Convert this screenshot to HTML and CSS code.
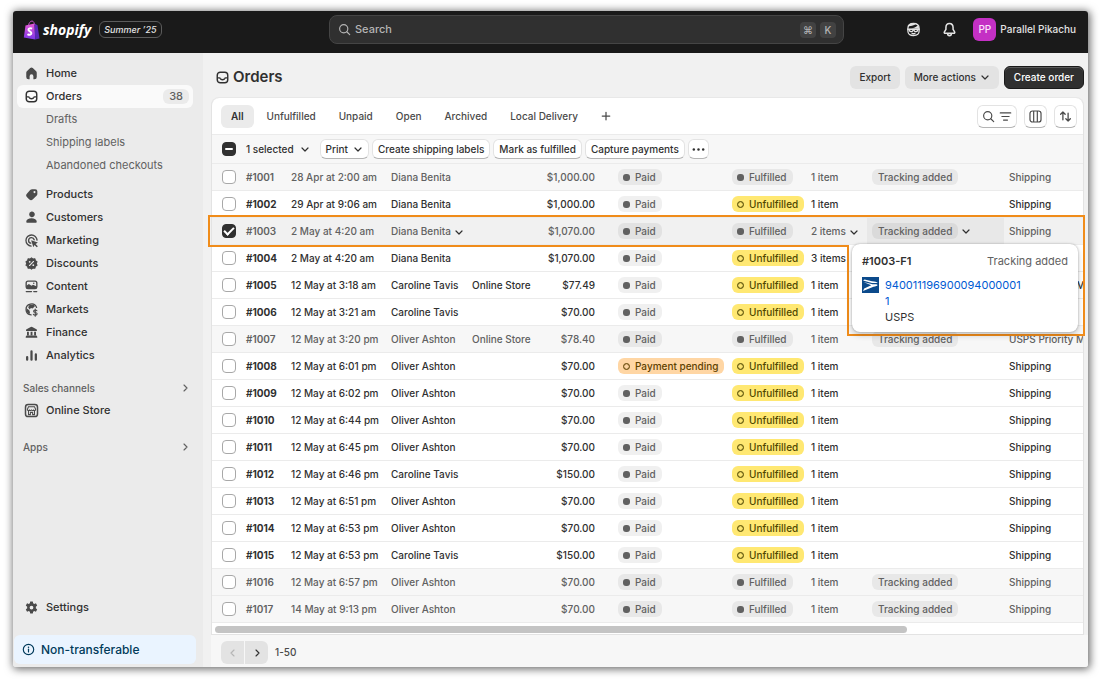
FILE: index.html
```html
<!DOCTYPE html>
<html lang="en">
<head>
    <meta charset="UTF-8">
    <meta name="viewport" content="width=device-width, initial-scale=1.0">
    <title>Orders</title>
    <link rel="stylesheet" href="styles.css">
</head>
<body>
    <!-- Icon set -->
    <svg class="sprite" aria-hidden="true">
        <symbol id="i-home" viewBox="0 0 20 20"><path fill="currentColor" d="M8.3 2.700a2.6 2.6 0 0 1 3.4 0l4.2 3.900c.7.6 1.1 1.5 1.1 2.4V14.500a3 3 0 0 1-3 3h-1.500V13.500a2.500 2.500 0 0 0-5 0v4H6a3 3 0 0 1-3-3V9c0-.9.4-1.800 1.100-2.400z"/></symbol>
        <symbol id="i-orders" viewBox="0 0 20 20"><g fill="none" stroke="currentColor" stroke-width="1.900"><rect x="3" y="3" width="14" height="14" rx="4"/><path d="M3 10.500h2.800c.6 0 1 .3 1.200.9.4 1 1.300 1.600 3 1.600s2.600-.6 3-1.600c.2-.6.6-.9 1.200-.9H17"/></g></symbol>
        <symbol id="i-tag" viewBox="0 0 20 20"><path fill="currentColor" fill-rule="evenodd" d="M10.800 3h4.200a2.800 2.800 0 0 1 2.800 2.800v3.400c0 1-.4 1.900-1.100 2.600l-4.800 4.600a3.600 3.600 0 0 1-5.100 0l-2.700-2.700a3.600 3.600 0 0 1 0-5.100l4.100-4.500C8.900 3.400 9.800 3 10.800 3zm3.200 5.200a1.400 1.400 0 1 0 0-2.800 1.400 1.400 0 0 0 0 2.800z"/></symbol>
        <symbol id="i-person" viewBox="0 0 20 20"><path fill="currentColor" d="M10 9.500a3.800 3.800 0 1 0 0-7.500 3.800 3.800 0 0 0 0 7.500zM3 15.500c0-2.800 3-4.500 7-4.500s7 1.700 7 4.500c0 1-.7 1.500-1.500 1.500h-11c-.8 0-1.500-.5-1.500-1.500z"/></symbol>
        <symbol id="i-target" viewBox="0 0 20 20"><g fill="none" stroke="currentColor" stroke-width="1.800" stroke-linecap="round"><path d="M17.400 9.500A7.400 7.400 0 1 0 9.500 17.400"/><path d="M13.600 9A3.800 3.800 0 1 0 9 13.600"/></g><path fill="currentColor" d="M9.500 9.500l9 3.200-3 1.800 3 3-1.500 1.500-3-3-1.500 3z"/></symbol>
        <symbol id="i-discount" viewBox="0 0 20 20"><path fill="currentColor" stroke="currentColor" stroke-linejoin="round" stroke-width="1.500" d="M10 2.500l2 1.600 2.600-.3.500 2.500 2.200 1.400-1 2.300 1 2.300-2.200 1.400-.5 2.500-2.600-.3-2 1.600-2-1.600-2.600.3-.5-2.500-2.200-1.400 1-2.300-1-2.300 2.200-1.400.5-2.500 2.600.3z"/><path stroke="#ebebeb" stroke-width="1.500" stroke-linecap="round" d="M12.700 7.300l-5.400 5.400"/><circle cx="7.600" cy="7.800" r="1.200" fill="#ebebeb"/><circle cx="12.400" cy="12.200" r="1.200" fill="#ebebeb"/></symbol>
        <symbol id="i-content" viewBox="0 0 20 20"><rect x="2.900" y="2.900" width="14.200" height="9.700" rx="2.500" fill="none" stroke="currentColor" stroke-width="1.800"/><path fill="currentColor" d="M3 9l3.500-2.500L10 9l2-1.500 5 2.500v2.500H3z"/><circle cx="13" cy="5.800" r="1" fill="currentColor"/><path stroke="currentColor" stroke-width="1.700" stroke-linecap="round" d="M3 16.700h7M13 16.700h4"/></symbol>
        <symbol id="i-globe" viewBox="0 0 20 20"><path fill="none" stroke="currentColor" stroke-width="1.700" stroke-linecap="round" d="M16.800 7.200A7.300 7.300 0 1 0 9.500 17.200"/><path fill="currentColor" d="M3 8l4 3 1 2.500-1 3-3.500-3.500zM7.500 3.500l6 .2 1 2-3 2.800-2.300-.5L7.500 10 5.500 7z"/><path fill="none" stroke="currentColor" stroke-width="1.500" stroke-linecap="round" d="M17.200 11.600c-.5-.8-1.300-1-2.200-1-1.200 0-2.200.6-2.200 1.700 0 2.400 4.700 1.100 4.700 3.500 0 1.100-1.100 1.700-2.500 1.700-1.100 0-2-.4-2.500-1.200M15 9.300v9.600"/></symbol>
        <symbol id="i-bank" viewBox="0 0 20 20"><path fill="currentColor" d="M9 2.700a2 2 0 0 1 2 0l5.600 2.800c1.300.7.900 2.500-.6 2.500h-12c-1.500 0-1.900-1.800-.6-2.500zM4 9h2.500v4.500H4zM8.800 9h2.500v4.500H8.800zM13.500 9H16v4.500h-2.500zM3.500 14h13c.8.8 1.300 1.500 1.300 2.200 0 .5-.4.800-.9.800H3.100c-.5 0-.9-.3-.9-.8 0-.7.500-1.400 1.300-2.200z"/></symbol>
        <symbol id="i-bars" viewBox="0 0 20 20"><path stroke="currentColor" stroke-width="3" stroke-linecap="round" d="M4.200 12v3.500M10 4.500v11M15.800 8.500v7"/></symbol>
        <symbol id="i-store" viewBox="0 0 20 20"><rect x="2" y="2" width="16" height="16" rx="3.500" fill="none" stroke="currentColor" stroke-width="2"/><path fill="none" stroke="currentColor" stroke-width="1.400" d="M6 5h8l1.500 3.500c0 2-2.700 2-2.700 0 0 2-2.800 2-2.800 0 0 2-2.800 2-2.800 0 0 2-2.700 2-2.700 0zM6 10v5.500h2.500V12.500h3v3H14V10"/></symbol>
        <symbol id="i-gear" viewBox="0 0 20 20"><path fill="currentColor" fill-rule="evenodd" d="M8.300 2h3.400l.5 2.400 1.400.8 2.300-.8 1.700 3-1.800 1.600v2l1.800 1.600-1.700 3-2.300-.8-1.400.8-.5 2.400H8.300l-.5-2.400-1.400-.8-2.300.8-1.700-3L4.200 11V9L2.400 7.400l1.700-3 2.300.8 1.400-.8zM10 12.500a2.500 2.500 0 1 0 0-5 2.500 2.500 0 0 0 0 5z"/></symbol>
        <symbol id="i-info" viewBox="0 0 20 20"><circle cx="10" cy="10" r="8" fill="none" stroke="currentColor" stroke-width="1.800"/><circle cx="10" cy="6.500" r="1.200" fill="currentColor"/><path stroke="currentColor" stroke-width="1.800" stroke-linecap="round" d="M10 9.500v4.200"/></symbol>
        <symbol id="i-search" viewBox="0 0 20 20"><g fill="none" stroke="currentColor" stroke-width="1.800" stroke-linecap="round"><circle cx="8.800" cy="8.800" r="6.300"/><path d="M13.500 13.500l4.500 4.500"/></g></symbol>
        <symbol id="i-down" viewBox="0 0 20 20"><path fill="none" stroke="currentColor" stroke-width="2.400" stroke-linecap="round" stroke-linejoin="round" d="M4 8l6 6 6-6"/></symbol>
        <symbol id="i-right" viewBox="0 0 20 20"><path fill="none" stroke="currentColor" stroke-width="2.300" stroke-linecap="round" stroke-linejoin="round" d="M8 4l6 6-6 6"/></symbol>
        <symbol id="i-left" viewBox="0 0 20 20"><path fill="none" stroke="currentColor" stroke-width="2.300" stroke-linecap="round" stroke-linejoin="round" d="M12 4l-6 6 6 6"/></symbol>
        <symbol id="i-plus" viewBox="0 0 20 20"><path stroke="currentColor" stroke-width="2.500" stroke-linecap="round" d="M10 2.500v15M2.500 10h15"/></symbol>
        <symbol id="i-filter" viewBox="0 0 20 20"><path stroke="currentColor" stroke-width="1.900" stroke-linecap="round" d="M2 4.500h16M4.500 10h11M7 15.500h6"/></symbol>
        <symbol id="i-columns" viewBox="0 0 20 20"><g fill="none" stroke="currentColor" stroke-width="1.800"><rect x="1.500" y="1.500" width="17" height="17" rx="4"/><path d="M7.200 1.500v17M12.800 1.500v17"/></g></symbol>
        <symbol id="i-sort" viewBox="0 0 20 20"><path fill="none" stroke="currentColor" stroke-width="2" stroke-linecap="round" stroke-linejoin="round" d="M6 15V3M2.500 6.500L6 3l3.500 3.500M14 5v12M10.500 13.500L14 17l3.500-3.500"/></symbol>
        <symbol id="i-dots" viewBox="0 0 20 20"><g fill="currentColor"><circle cx="2.800" cy="10" r="1.900"/><circle cx="10" cy="10" r="1.900"/><circle cx="17.200" cy="10" r="1.900"/></g></symbol>
        <symbol id="i-bell" viewBox="0 0 20 20"><path fill="none" stroke="currentColor" stroke-width="1.800" stroke-linejoin="round" d="M10 3c-2.700 0-4.200 2-4.200 4.600v2.300L4 12.800c-.5.800 0 1.700.9 1.700h10.200c.9 0 1.400-.9.900-1.700l-1.800-2.900V7.600C14.200 5 12.700 3 10 3zM7.800 15c0 1.400.9 2.200 2.200 2.200s2.200-.8 2.200-2.200"/></symbol>
        <symbol id="i-sidekick" viewBox="0 0 20 20"><path fill="none" stroke="currentColor" stroke-width="1.700" d="M2.500 8.500c0-4.500 3-6.500 7.500-6.500s7.500 2 7.500 6.500v3.500c0 4-3 6-7.500 6s-7.500-2-7.500-6z"/><path fill="currentColor" d="M2.500 5.500L5 2.800 10 1.500l3.500.6C11 4.800 6.500 5.800 2.500 5.500zM3 8.300c5 .3 10-.8 12.500-3.800l2 3-.2 1.500z"/><path fill="none" stroke="currentColor" stroke-width="1.800" stroke-linecap="round" d="M2.500 9.600h15M4.300 10c0 3.600 4.700 3.600 5.200.4h1c.5 3.200 5.200 3.200 5.200-.4M8 15c1.300.8 2.700.8 4 0"/></symbol>
    </svg>

    <div class="window">
        <header class="topbar">
            <div class="brand">
                <svg class="bag" viewBox="0 0 16 20" aria-hidden="true">
                    <defs>
                        <linearGradient id="bagFill" x1="0" y1="0" x2="0" y2="1">
                            <stop offset="0" stop-color="#ea5bd6"/>
                            <stop offset="1" stop-color="#7a35e8"/>
                        </linearGradient>
                    </defs>
                    <path d="M5 6c0-3 2-5 3.500-5S11 3 11 5" fill="none" stroke="#b84fc0" stroke-width="1"/>
                    <path d="M2 5.500l9-2 .7 16L.3 17.500z" fill="url(#bagFill)"/>
                    <path d="M11 3.500l3 1.700L16 18.500l-4.300 1z" fill="#5a28b8"/>
                    <path d="M8.600 8.700c-1.500-.8-3.700-.5-3.700 1.100 0 1.700 3 1.500 3 3.500 0 1.700-2.300 1.900-3.900.8" fill="none" stroke="#fff" stroke-width="1.900"/>
                </svg>
                <span class="wordmark">shopify</span>
                <span class="edition">Summer ’25</span>
            </div>
            <label class="search">
                <svg class="icon"><use href="#i-search"/></svg>
                <input type="text" placeholder="Search" aria-label="Search">
                <kbd>⌘</kbd>
                <kbd>K</kbd>
            </label>
            <div class="account">
                <button class="top-icon" aria-label="Sidekick"><svg class="icon icon-md"><use href="#i-sidekick"/></svg></button>
                <button class="top-icon" aria-label="Notifications"><svg class="icon icon-lg"><use href="#i-bell"/></svg></button>
                <button class="user"><span class="avatar">PP</span>Parallel Pikachu</button>
            </div>
        </header>

        <div class="layout">
            <nav class="sidebar">
                <a href="#" class="nav-item"><svg class="icon icon-md"><use href="#i-home"/></svg>Home</a>
                <a href="#" class="nav-item active"><svg class="icon icon-md"><use href="#i-orders"/></svg>Orders<span class="count">38</span></a>
                <a href="#" class="nav-item sub">Drafts</a>
                <a href="#" class="nav-item sub">Shipping labels</a>
                <a href="#" class="nav-item sub last">Abandoned checkouts</a>
                <a href="#" class="nav-item"><svg class="icon icon-md"><use href="#i-tag"/></svg>Products</a>
                <a href="#" class="nav-item"><svg class="icon icon-md"><use href="#i-person"/></svg>Customers</a>
                <a href="#" class="nav-item"><svg class="icon icon-md"><use href="#i-target"/></svg>Marketing</a>
                <a href="#" class="nav-item"><svg class="icon icon-md"><use href="#i-discount"/></svg>Discounts</a>
                <a href="#" class="nav-item"><svg class="icon icon-md"><use href="#i-content"/></svg>Content</a>
                <a href="#" class="nav-item"><svg class="icon icon-md"><use href="#i-globe"/></svg>Markets</a>
                <a href="#" class="nav-item"><svg class="icon icon-md"><use href="#i-bank"/></svg>Finance</a>
                <a href="#" class="nav-item"><svg class="icon icon-md"><use href="#i-bars"/></svg>Analytics</a>
                <button class="nav-section">Sales channels<svg class="icon icon-sm"><use href="#i-right"/></svg></button>
                <a href="#" class="nav-item"><svg class="icon icon-md"><use href="#i-store"/></svg>Online Store</a>
                <button class="nav-section">Apps<svg class="icon icon-sm"><use href="#i-right"/></svg></button>
                <a href="#" class="nav-item settings"><svg class="icon icon-md"><use href="#i-gear"/></svg>Settings</a>
                <a href="#" class="notice"><svg class="icon"><use href="#i-info"/></svg>Non-transferable</a>
            </nav>

            <main class="main">
                <div class="page-header">
                    <h1><svg class="icon icon-md"><use href="#i-orders"/></svg>Orders</h1>
                    <button class="btn">Export</button>
                    <button class="btn">More actions<svg class="icon icon-sm"><use href="#i-down"/></svg></button>
                    <button class="btn primary">Create order</button>
                </div>

                <section class="card">
                    <div class="tabs">
                        <button class="tab active">All</button>
                        <button class="tab">Unfulfilled</button>
                        <button class="tab">Unpaid</button>
                        <button class="tab">Open</button>
                        <button class="tab">Archived</button>
                        <button class="tab">Local Delivery</button>
                        <button class="tab" aria-label="Add view"><svg class="icon icon-sm"><use href="#i-plus"/></svg></button>
                        <div class="tools">
                            <button class="tool wide" aria-label="Search and filter"><svg class="icon"><use href="#i-search"/></svg><svg class="icon"><use href="#i-filter"/></svg></button>
                            <button class="tool" aria-label="Columns"><svg class="icon"><use href="#i-columns"/></svg></button>
                            <button class="tool" aria-label="Sort"><svg class="icon"><use href="#i-sort"/></svg></button>
                        </div>
                    </div>

                    <div class="bulk">
                        <input type="checkbox" class="mixed" aria-label="Select all orders">
                        <button class="selected">1 selected<svg class="icon icon-sm"><use href="#i-down"/></svg></button>
                        <button class="bulk-btn">Print<svg class="icon icon-sm"><use href="#i-down"/></svg></button>
                        <button class="bulk-btn">Create shipping labels</button>
                        <button class="bulk-btn">Mark as fulfilled</button>
                        <button class="bulk-btn">Capture payments</button>
                        <button class="bulk-btn more" aria-label="More"><svg class="icon"><use href="#i-dots"/></svg></button>
                    </div>

                    <div class="table-area">
                        <table class="orders">
                            <colgroup>
                                <col class="c-check"><col class="c-id"><col class="c-date"><col class="c-customer"><col class="c-channel">
                                <col class="c-total"><col class="c-payment"><col class="c-fulfil"><col class="c-items"><col class="c-delivery"><col>
                            </colgroup>
                            <tbody id="rows"></tbody>
                        </table>

                        <!-- Outline around the selected row and its popover -->
                        <div class="outline outline-row"></div>
                        <div class="outline outline-popover"></div>

                        <div class="popover">
                            <div class="popover-head"><strong>#1003-F1</strong><span>Tracking added</span></div>
                            <div class="popover-body">
                                <svg class="usps" viewBox="0 0 17 16" aria-hidden="true">
                                    <rect width="17" height="16" fill="#0b4a8b"/>
                                    <path d="M2.500 2.500l7.500 1.700c3 .2 4.500.5 5.800 1.800H10L1 3.600zM1.500 5l9 2.200c2.500 0 5-.4 5 .8 0 1-2 1.300-4 1.800L1 14l1.200-2.500 7-3.300z" fill="#fff"/>
                                </svg>
                                <div>
                                    <a href="#" class="tracking">9400111969000940000011</a>
                                    <div>USPS</div>
                                </div>
                            </div>
                        </div>
                    </div>
                    <div class="scroll-track"><div class="scroll-thumb"></div></div>
                </section>

                <footer class="pager">
                    <div class="pager-buttons">
                        <button disabled aria-label="Previous"><svg class="icon icon-sm"><use href="#i-left"/></svg></button>
                        <button aria-label="Next"><svg class="icon icon-sm"><use href="#i-right"/></svg></button>
                    </div>
                    <span>1-50</span>
                </footer>
            </main>
        </div>
    </div>

    <script>
        // id, date, customer, channel, total, payment, fulfilled, items, method
        const orders = [
            [1001, "28 Apr at 2:00 am", "Diana Benita", "", "$1,000.00", "Paid", true, 1, "Shipping"],
            [1002, "29 Apr at 9:06 am", "Diana Benita", "", "$1,000.00", "Paid", false, 1, "Shipping"],
            [1003, "2 May at 4:20 am", "Diana Benita", "", "$1,070.00", "Paid", true, 2, "Shipping"],
            [1004, "2 May at 4:20 am", "Diana Benita", "", "$1,070.00", "Paid", false, 3, "Shipping"],
            [1005, "12 May at 3:18 am", "Caroline Tavis", "Online Store", "$77.49", "Paid", false, 1, "USPS Priority Mail"],
            [1006, "12 May at 3:21 am", "Caroline Tavis", "", "$70.00", "Paid", false, 1, "Shipping"],
            [1007, "12 May at 3:20 pm", "Oliver Ashton", "Online Store", "$78.40", "Paid", true, 1, "USPS Priority Mail"],
            [1008, "12 May at 6:01 pm", "Oliver Ashton", "", "$70.00", "Payment pending", false, 1, "Shipping"],
            [1009, "12 May at 6:02 pm", "Oliver Ashton", "", "$70.00", "Paid", false, 1, "Shipping"],
            [1010, "12 May at 6:44 pm", "Oliver Ashton", "", "$70.00", "Paid", false, 1, "Shipping"],
            [1011, "12 May at 6:45 pm", "Oliver Ashton", "", "$70.00", "Paid", false, 1, "Shipping"],
            [1012, "12 May at 6:46 pm", "Caroline Tavis", "", "$150.00", "Paid", false, 1, "Shipping"],
            [1013, "12 May at 6:51 pm", "Oliver Ashton", "", "$70.00", "Paid", false, 1, "Shipping"],
            [1014, "12 May at 6:53 pm", "Oliver Ashton", "", "$70.00", "Paid", false, 1, "Shipping"],
            [1015, "12 May at 6:53 pm", "Caroline Tavis", "", "$150.00", "Paid", false, 1, "Shipping"],
            [1016, "12 May at 6:57 pm", "Oliver Ashton", "", "$70.00", "Paid", true, 1, "Shipping"],
            [1017, "14 May at 9:13 pm", "Oliver Ashton", "", "$70.00", "Paid", true, 1, "Shipping"]
        ];

        const chevron = '<svg class="icon icon-sm"><use href="#i-down"/></svg>';

        function badge(text, type) {
            return `<span class="badge ${type}"><i></i>${text}</span>`;
        }

        document.getElementById('rows').innerHTML = orders.map(([id, date, customer, channel, total, payment, fulfilled, items, method]) => {
            const selected = id === 1003;
            const arrow = selected ? chevron : '';
            return `<tr class="${fulfilled ? 'done' : ''} ${selected ? 'is-selected' : ''}">
                <td><input type="checkbox" aria-label="Select order ${id}" ${selected ? 'checked' : ''}></td>
                <td class="id">#${id}</td>
                <td>${date}</td>
                <td>${customer}${arrow}</td>
                <td>${channel}</td>
                <td class="total">${total}</td>
                <td>${badge(payment, payment === 'Paid' ? 'grey' : 'orange')}</td>
                <td>${fulfilled ? badge('Fulfilled', 'grey') : badge('Unfulfilled', 'yellow')}</td>
                <td>${items} item${items > 1 ? 's' : ''}${arrow}</td>
                <td class="delivery">${fulfilled ? '<span class="badge grey plain">Tracking added</span>' : ''}${arrow}</td>
                <td class="method">${method}</td>
            </tr>`;
        }).join('');
    </script>
</body>
</html>
```

FILE: styles.css
```css
* {
    box-sizing: border-box;
}

body {
    margin: 0;
    padding: 11px 12px 12px 13px;
    background: #fff;
    font-family: Inter, "Liberation Sans", sans-serif;
    font-size: 10px;
    line-height: 15px;
    font-weight: 450;
    color: #303030;
}

button, input {
    font: inherit;
    color: inherit;
}

button {
    display: inline-flex;
    align-items: center;
    justify-content: center;
    border: none;
    background: none;
    padding: 0;
    cursor: pointer;
    white-space: nowrap;
}

a {
    color: inherit;
    text-decoration: none;
}

.sprite {
    display: none;
}

.icon {
    width: 13px;
    height: 13px;
    flex: none;
}

.icon-sm {
    width: 10px;
    height: 10px;
}

.icon-md {
    width: 15px;
    height: 15px;
}

.icon-lg {
    width: 17px;
    height: 17px;
}

.window {
    display: flex;
    flex-direction: column;
    min-height: calc(100vh - 23px);
    border-radius: 3px;
    overflow: hidden;
    background: #f1f1f1;
    box-shadow: 1px 1px 8px 1px rgba(0, 0, 0, 0.6);
}

/* Top bar */
.topbar {
    display: grid;
    grid-template-columns: 316fr 515fr 244fr;
    align-items: center;
    height: 42px;
    padding-bottom: 5px;
    background: #1a1a1a;
}

.brand {
    display: flex;
    align-items: center;
    padding-left: 10px;
}

.bag {
    width: 17px;
    height: 20px;
}

.wordmark {
    margin: 0 8px 0 3px;
    color: #fff;
    font-family: "Open Sans", sans-serif;
    font-size: 14px;
    line-height: 20px;
    font-weight: 700;
    font-style: italic;
}

.edition {
    padding: 0 4px;
    border: 1px solid #5c5c5c;
    border-radius: 6px;
    color: #e3e3e3;
    font-size: 9px;
    font-style: italic;
    font-weight: 500;
}

.search {
    display: flex;
    align-items: center;
    gap: 4px;
    height: 29px;
    padding: 0 7px 0 8px;
    border: 1px solid #454545;
    border-radius: 8px;
    background: #303030;
    color: #b5b5b5;
    font-size: 11px;
}

.search input {
    flex: 1;
    min-width: 0;
    padding: 0;
    border: none;
    outline: none;
    background: none;
}

.search input::placeholder {
    color: #b5b5b5;
    opacity: 1;
}

kbd {
    width: 16px;
    height: 16px;
    border-radius: 4px;
    background: #424242;
    font: 500 10px/16px Inter, "DejaVu Sans", sans-serif;
    text-align: center;
}

.account {
    display: flex;
    align-items: center;
    justify-content: flex-end;
    padding-right: 12px;
    color: #e3e3e3;
}

.top-icon {
    width: 36px;
    height: 23px;
}

.user {
    gap: 4px;
    margin-left: 6px;
    font-weight: 500;
}

.avatar {
    width: 23px;
    height: 23px;
    border-radius: 6px;
    background: #c430c4;
    color: #fbe3fb;
    font-size: 10px;
    line-height: 23px;
}

.layout {
    display: flex;
    flex: 1;
}

/* Sidebar */
.sidebar {
    display: flex;
    flex-direction: column;
    flex: none;
    width: 190px;
    padding: 9px 10px 3px 4px;
    background: #ebebeb;
}

.nav-item {
    display: flex;
    align-items: center;
    gap: 7px;
    height: 23px;
    padding: 0 4px 0 7px;
    border-radius: 6px;
    font-size: 11px;
    font-weight: 550;
}

.nav-item .icon {
    color: #4a4a4a;
}

.nav-item.active {
    background: #fafafa;
}

.nav-item.active .icon {
    color: #303030;
}

.nav-item.sub {
    padding-left: 29px;
    color: #616161;
    font-weight: 400;
}

.nav-item.last {
    margin-bottom: 6px;
}

.count {
    margin-left: auto;
    padding: 0 6px;
    border-radius: 6px;
    background: #ebebeb;
    color: #616161;
    font-weight: 450;
}

.nav-section {
    justify-content: space-between;
    height: 22px;
    margin-top: 10px;
    padding: 0 3px 0 6px;
    color: #616161;
    font-weight: 500;
}

.nav-item + .nav-section:nth-of-type(2) {
    margin-top: 14px;
}

.settings {
    margin-top: auto;
}

.notice {
    display: flex;
    align-items: center;
    gap: 6px;
    height: 29px;
    margin: 16px -3px 0 -3px;
    padding-left: 8px;
    border-radius: 6px;
    background: #eaf4ff;
    color: #003a5a;
    font-size: 12px;
    font-weight: 500;
}

/* Main column */
.main {
    display: flex;
    flex-direction: column;
    flex: 1;
    min-width: 0;
    padding-left: 8px;
}

.page-header {
    display: flex;
    align-items: center;
    gap: 5px;
    height: 45px;
    padding: 3px 4px 0 4px;
}

h1 {
    display: flex;
    align-items: center;
    gap: 3px;
    margin: 0 auto 0 0;
    font-size: 15px;
    line-height: 20px;
    font-weight: 600;
}

.btn {
    gap: 4px;
    height: 23px;
    padding: 0 9px;
    border-radius: 6px;
    background: #e3e3e3;
    font-weight: 550;
}

.btn.primary {
    border: 1px solid #1a1a1a;
    background: #303030;
    box-shadow: inset 0 1px 0 #5a5a5a;
    color: #fff;
}

.card {
    margin-right: 4px;
    border: solid #e3e3e3;
    border-width: 0 1px;
    border-radius: 8px 8px 0 0;
    background: #fff;
    box-shadow: 0 -1px 0 #e8e8e8;
}

.tabs {
    display: flex;
    align-items: center;
    gap: 3px;
    height: 37px;
    padding: 0 6px 0 9px;
    border-bottom: 1px solid #ebebeb;
}

.tab {
    height: 23px;
    padding: 0 10px;
    border-radius: 6px;
    color: #4a4a4a;
    font-weight: 500;
}

.tab.active {
    background: #ebebeb;
    color: #303030;
    font-weight: 600;
}

.tools {
    display: flex;
    gap: 7px;
    margin-left: auto;
}

.tool {
    gap: 4px;
    width: 23px;
    height: 23px;
    border: 1px solid #e3e3e3;
    border-bottom-color: #b5b5b5;
    border-radius: 6px;
    background: #fff;
    color: #4a4a4a;
}

.tool.wide {
    width: 40px;
}

.bulk {
    display: flex;
    align-items: center;
    gap: 3px;
    height: 29px;
    padding: 0 10px;
    border-bottom: 1px solid #ebebeb;
    background: #f7f7f7;
}

.selected {
    gap: 6px;
    margin: 0 7px;
    font-weight: 550;
}

.bulk-btn {
    gap: 5px;
    height: 20px;
    padding: 0 5px;
    border: 1px solid #e3e3e3;
    border-bottom-color: #b5b5b5;
    border-radius: 6px;
    background: #fff;
    font-weight: 550;
}

.bulk-btn.more {
    padding: 0 3px;
}

input[type="checkbox"] {
    display: block;
    appearance: none;
    flex: none;
    width: 14px;
    height: 14px;
    margin: 0;
    border: 1px solid #a8a8a8;
    border-radius: 4px;
    background: #fff;
}

input[type="checkbox"].mixed,
input[type="checkbox"]:checked {
    display: grid;
    place-items: center;
    border-color: #303030;
    background: #303030;
}

.mixed::before {
    content: '';
    width: 8px;
    height: 2px;
    border-radius: 1px;
    background: #fff;
}

input[type="checkbox"]:checked::before {
    content: '';
    width: 4px;
    height: 8px;
    margin-bottom: 2px;
    border: solid #fff;
    border-width: 0 2px 2px 0;
    transform: rotate(45deg);
}

/* Orders table */
.table-area {
    position: relative;
}

.orders {
    width: 100%;
    table-layout: fixed;
    border-collapse: separate;
    border-spacing: 0;
}

.c-check { width: 29px; }
.c-id { width: 45px; }
.c-date { width: 100px; }
.c-customer { width: 81px; }
.c-channel { width: 73px; }
.c-total { width: 73px; }
.c-payment { width: 114px; }
.c-fulfil { width: 79px; }
.c-items { width: 61px; }
.c-delivery { width: 137px; }

.orders td {
    height: 27px;
    padding: 0 0 0 5px;
    border-bottom: 1px solid #ebebeb;
    white-space: nowrap;
}

.orders td:first-child {
    padding-left: 10px;
}

.orders .id {
    font-weight: 700;
}

.orders .total {
    padding-right: 18px;
    text-align: right;
}

.orders .method {
    overflow: hidden;
}

.orders .icon {
    margin-left: 3px;
    color: #303030;
    vertical-align: -2px;
}

.orders .done td {
    background: #f7f7f7;
    color: #616161;
}

.orders .done .id {
    font-weight: 600;
}

.orders .is-selected td {
    background: #f1f1f1;
}

.orders .is-selected .delivery {
    background: #e8e8e8;
}

.badge {
    display: inline-flex;
    align-items: center;
    gap: 5px;
    height: 16px;
    padding: 0 6px 0 5px;
    border-radius: 6px;
    vertical-align: middle;
}

.badge i {
    width: 7px;
    height: 7px;
    border-radius: 3px;
}

.badge.grey {
    background: rgba(0, 0, 0, 0.06);
    color: #616161;
}

.badge.grey i {
    background: #616161;
}

.badge.yellow,
.badge.orange {
    font-weight: 500;
}

.badge.yellow {
    background: #ffe872;
    color: #4f4700;
}

.badge.orange {
    background: #ffd6a4;
    color: #5e4200;
}

.badge.yellow i,
.badge.orange i {
    border: 1px solid currentColor;
    border-radius: 4px;
    box-shadow: inset 0 0 1px currentColor;
}

.badge.plain {
    padding: 0 6px;
}

.outline {
    position: absolute;
    right: -2px;
    border: 2px solid #f08c1a;
}

.outline-row {
    top: 51px;
    left: -4px;
    height: 32px;
    border-bottom: none;
}

.outline-row::after {
    content: '';
    position: absolute;
    bottom: 0;
    left: 0;
    right: 234px;
    height: 2px;
    background: #f08c1a;
}

.outline-popover {
    top: 81px;
    width: 238px;
    height: 91px;
    border-top: none;
}

.popover {
    position: absolute;
    top: 80px;
    right: 5px;
    width: 226px;
    padding: 10px 10px 7px;
    border-radius: 8px;
    background: #fff;
    box-shadow: 0 3px 6px rgba(0, 0, 0, 0.2), 0 0 2px rgba(0, 0, 0, 0.3);
    font-size: 11px;
    font-weight: 400;
}

.popover-head {
    display: flex;
    justify-content: space-between;
    margin-bottom: 8px;
}

.popover-head strong {
    font-weight: 600;
}

.popover-head span {
    color: #616161;
}

.popover-body {
    display: flex;
    gap: 6px;
    line-height: 16px;
}

.usps {
    width: 17px;
    height: 16px;
    flex: none;
}

.tracking {
    display: block;
    max-width: 137px;
    color: #005bd3;
    word-break: break-all;
}

.scroll-track {
    padding: 3px 3px 1px;
    border-bottom: 1px solid #e3e3e3;
}

.scroll-thumb {
    width: 80%;
    height: 7px;
    border-radius: 4px;
    background: #c4c4c4;
}

.pager {
    display: flex;
    flex: 1;
    align-items: center;
    gap: 7px;
    padding: 3px 10px 0;
    background: #f7f7f7;
    color: #4a4a4a;
}

.pager-buttons {
    display: flex;
    gap: 1px;
}

.pager button {
    width: 23px;
    height: 23px;
    border-radius: 6px 0 0 6px;
    background: #e3e3e3;
    color: #303030;
}

.pager button + button {
    border-radius: 0 6px 6px 0;
}

.pager button:disabled {
    color: #b5b5b5;
}
```
